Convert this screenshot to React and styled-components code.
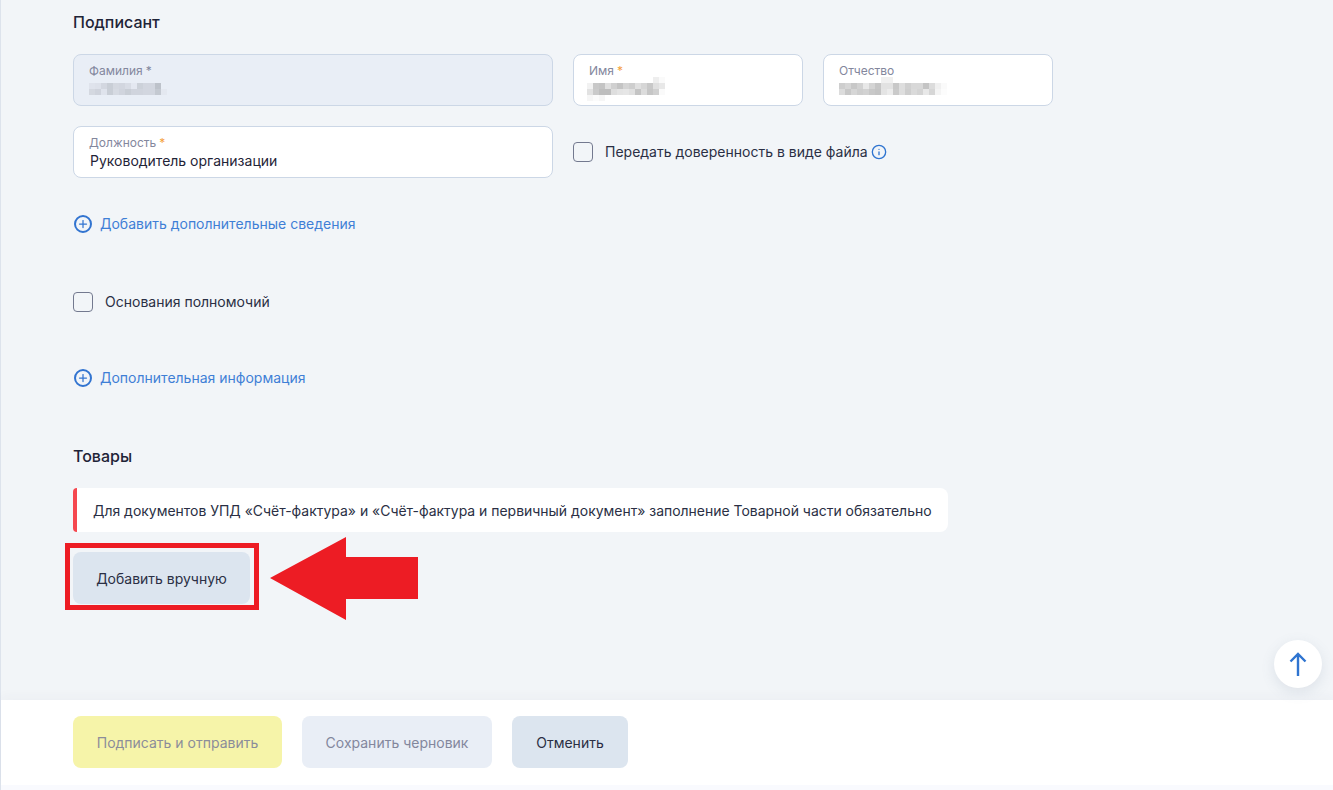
import React from 'react';
import styled, { createGlobalStyle } from 'styled-components';
import { Plus, Info } from 'lucide-react';

const GlobalStyle = createGlobalStyle`
    html, body {
        margin: 0;
        padding: 0;
        background: #f2f5f8;
        font-family: Inter, "Noto Sans", sans-serif;
    }
    #root {
        height: 790px;
        overflow: hidden;
    }
`

const Page = styled.div`
    position: relative;
    height: 790px;
    display: flex;
    flex-direction: column;
    border-left: 1px solid #dde3ec;
    box-sizing: border-box;
`

const Content = styled.div`
    height: 700px;
    padding: 13px 0 0 72px;
    box-sizing: border-box;
    flex-shrink: 0;
`

const Title = styled.h2`
    margin: ${props => props.$top || 0}px 0 ${props => props.$gap}px;
    font-size: 16px;
    line-height: 19px;
    font-weight: 450;
    color: #1f2437;
`

const Row = styled.div`
    display: flex;
    gap: 20px;
    margin-bottom: 20px;
    align-items: ${props => props.$center ? "center" : "stretch"};
`

const Field = styled.div`
    width: ${props => props.$width}px;
    height: 52px;
    box-sizing: border-box;
    padding: 8px 15px 0;
    border: 1px solid #ccd7e6;
    border-radius: 8px;
    background: ${props => props.$disabled ? "#e9eef6" : "#ffffff"};
`

const FieldLabel = styled.div`
    font-size: 12px;
    line-height: 15px;
    color: #83879d;
    display: flex;
    gap: 3px;
`

const Star = styled.span`
    color: ${props => props.$muted ? "#83879d" : "#f5a13c"};
`

const FieldValue = styled.div`
    font-size: 14px;
    line-height: 17px;
    margin-top: 2px;
    padding-left: 1px;
    color: #1f2437;
`

const Blur = styled.div`
    display: grid;
    grid-template-columns: repeat(${props => props.$cols}, 6px);
    grid-auto-rows: 6px;
    margin-top: ${props => props.$top}px;
    margin-left: ${props => props.$left || 0}px;
`

const BlurCell = styled.span`
    background: ${props => props.$color};
`

const CheckRow = styled.label`
    display: flex;
    align-items: center;
    gap: 12px;
    font-size: 14px;
    line-height: 20px;
    color: #2a2f44;
`

const CheckBox = styled.span`
    width: 20px;
    height: 20px;
    box-sizing: border-box;
    border: 1px solid #73798f;
    border-radius: 4px;
    flex-shrink: 0;
`

const InfoMark = styled.span`
    display: inline-flex;
    margin-left: 3px;
    vertical-align: -3px;
    color: #2f74d0;
`

const AddLink = styled.a`
    display: flex;
    align-items: center;
    gap: 8px;
    font-size: 14px;
    line-height: 20px;
    color: #3f7fd6;
    margin-top: ${props => props.$top}px;
    margin-left: 1px;
`

const PlusCircle = styled.span`
    width: 18px;
    height: 18px;
    box-sizing: border-box;
    border: 2px solid #3274d0;
    border-radius: 50%;
    display: flex;
    align-items: center;
    justify-content: center;
    color: #3274d0;
`

const SectionCheck = styled.div`
    margin-top: 58px;
`

const Alert = styled.div`
    width: 875px;
    height: 44px;
    box-sizing: border-box;
    display: flex;
    align-items: center;
    padding-left: 16px;
    background: #ffffff;
    border-left: 4px solid #f5474f;
    border-radius: 4px 8px 8px 4px;
    font-size: 13.96px;
    color: #2a2f44;
    white-space: nowrap;
`

const ActionArea = styled.div`
    position: relative;
    margin-top: 20px;
    width: 177px;
`

const Button = styled.button`
    height: 52px;
    width: ${props => props.$width}px;
    border: none;
    border-radius: 8px;
    font-family: inherit;
    font-size: 14px;
    background: ${props =>
        props.$variant === "primary" ? "#f6f4a9" :
        props.$variant === "muted" ? "#e9eef6" : "#dce5ef"};
    color: ${props =>
        props.$variant === "primary" ? "#8c8d9a" :
        props.$variant === "muted" ? "#83879d" : "#2a2f44"};
`

const Highlight = styled.div`
    position: absolute;
    left: -8px;
    top: -9px;
    width: 194px;
    height: 67px;
    box-sizing: border-box;
    border: 5px solid #ed1c24;
    pointer-events: none;
`

const Arrow = styled.svg`
    position: absolute;
    left: 197px;
    top: -15px;
`

const Footer = styled.div`
    height: 85px;
    box-sizing: border-box;
    background: #ffffff;
    display: flex;
    align-items: flex-start;
    gap: 20px;
    padding: 16px 0 0 72px;
    flex-shrink: 0;
    box-shadow: 0 -4px 10px rgba(60, 70, 90, 0.03);
`

const Bottom = styled.div`
    flex: 1;
    background: #f9fafe;
`

const ScrollTop = styled.button`
    position: absolute;
    left: 1273px;
    top: 640px;
    width: 48px;
    height: 48px;
    border: none;
    border-radius: 50%;
    padding: 0;
    background: #ffffff;
    color: #2f74d0;
    box-shadow: 0 4px 14px rgba(90, 110, 140, 0.14);
    display: flex;
    align-items: center;
    justify-content: center;
`

const w = "#ffffff"

const surname = [
    "#dfe3ec", "#dde1ea", "#d3d7e0", "#c9ced6", "#d4d8e0", "#d2d6df", "#d8dce5", "#e4e8f1", "#ccd1d9", "#d2d6df", "#d2d6df", "#bdc2ca", "#e9eef6",
    "#d4d8e0", "#cfd3dc", "#dfe3ec", "#c9ced6", "#d6dae2", "#d0d4dd", "#c9ced6", "#d0d4dd", "#d0d4dd", "#d2d6df", "#d2d6df", "#c4c9d1", "#e4e8f0",
]

const firstName = [
    w, w, w, w, w, w, w, w, w, w, w, "#eeeeee", "#fafafa",
    "#f2f2f2", "#c8c8c8", "#c4c4c4", "#e0e0e0", "#d0d0d0", "#c4c4c4", "#d4d4d4", "#cecece", "#e0e0e0", "#d6d6d6", "#c8c8c8", "#e0e0e0", "#e8e8e8",
    "#e2e2e2", "#cacaca", "#bebebe", "#bebebe", "#dedede", "#e4e4e4", "#e6e6e6", "#e0e0e0", "#c4c4c4", "#dcdcdc", "#c6c6c6", "#d0d0d0", "#fafafa",
    "#f6f6f6", "#fbfbfb", "#f6f6f6", w, w, w, w, w, w, w, w, w, w,
]

const patronymic = [
    w, w, w, w, w, w, w, "#f0f0f0", "#f0f0f0", w, w, w, w, w, w, w, w, w,
    "#cecece", "#d6d6d6", "#c8c8c8", "#d2d2d2", "#e8e8e8", "#d4d4d4", "#c6c6c6", "#e2e2e2", "#e2e2e2", "#c8c8c8", "#dedede", "#d0d0d0", "#d8d8d8", "#d8d8d8", "#c4c4c4", "#dcdcdc", "#f0f0f0", "#fafafa",
    "#dcdcdc", "#c8c8c8", "#d6d6d6", "#cecece", "#d2d2d2", "#c8c8c8", "#c4c4c4", "#e4e4e4", "#ececec", "#cacaca", "#dedede", "#cecece", "#dadada", "#d4d4d4", "#e8e8e8", "#d6d6d6", "#f4f4f4", "#fcfcfc",
]

const Pixels = ({ cells, cols, top, left }) => (
    <Blur $cols={cols} $top={top} $left={left}>
        {cells.map((color, index) => <BlurCell key={index} $color={color} />)}
    </Blur>
)

const AddRow = ({ top, children }) => (
    <AddLink $top={top}>
        <PlusCircle><Plus size={12} strokeWidth={2.5} /></PlusCircle>
        {children}
    </AddLink>
)

const App = () => {
    return (
        <Page>
            <GlobalStyle />
            <Content>
                <Title $gap={22}>Подписант</Title>
                <Row>
                    <Field $width={480} $disabled>
                        <FieldLabel>Фамилия <Star $muted>*</Star></FieldLabel>
                        <Pixels cells={surname} cols={13} top={5} />
                    </Field>
                    <Field $width={230}>
                        <FieldLabel>Имя <Star>*</Star></FieldLabel>
                        <Pixels cells={firstName} cols={13} top={-1} left={-2} />
                    </Field>
                    <Field $width={230}>
                        <FieldLabel>Отчество</FieldLabel>
                        <Pixels cells={patronymic} cols={18} top={-1} />
                    </Field>
                </Row>
                <Row $center>
                    <Field $width={480}>
                        <FieldLabel>Должность <Star>*</Star></FieldLabel>
                        <FieldValue>Руководитель организации</FieldValue>
                    </Field>
                    <CheckRow>
                        <CheckBox />
                        <span>
                            Передать доверенность в виде файла
                            <InfoMark><Info size={16} strokeWidth={2} /></InfoMark>
                        </span>
                    </CheckRow>
                </Row>
                <AddRow top={36}>Добавить дополнительные сведения</AddRow>
                <SectionCheck>
                    <CheckRow>
                        <CheckBox />
                        Основания полномочий
                    </CheckRow>
                </SectionCheck>
                <AddRow top={56}>Дополнительная информация</AddRow>
                <Title $top={59} $gap={22}>Товары</Title>
                <Alert>Для документов УПД «Счёт-фактура» и «Счёт-фактура и первичный документ» заполнение Товарной части обязательно</Alert>
                <ActionArea>
                    <Button $width={177}>Добавить вручную</Button>
                    <Highlight />
                    <Arrow width="150" height="85" viewBox="0 0 150 85">
                        <path d="M0 41 L76 0 V20 H148 V62 H76 V83 Z" fill="#ed1c24" />
                    </Arrow>
                </ActionArea>
            </Content>
            <Footer>
                <Button $width={209} $variant="primary">Подписать и отправить</Button>
                <Button $width={190} $variant="muted">Сохранить черновик</Button>
                <Button $width={116}>Отменить</Button>
            </Footer>
            <Bottom />
            <ScrollTop>
                <svg width="18" height="25" viewBox="0 0 18 25" fill="none" stroke="currentColor" strokeWidth="2.4">
                    <path d="M9 24 V2 M1.5 9.5 L9 2 L16.5 9.5" />
                </svg>
            </ScrollTop>
        </Page>
    )
}

export default App
